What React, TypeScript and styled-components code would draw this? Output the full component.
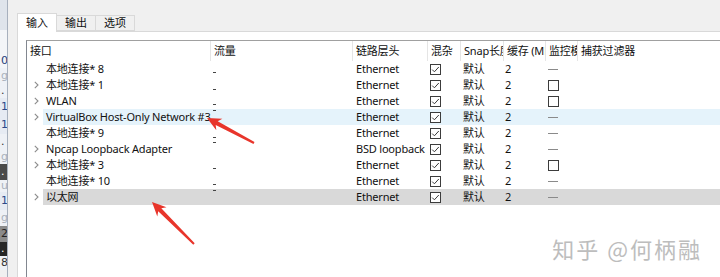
import React from "react";
import styled, { createGlobalStyle } from "styled-components";

type Tone = "plain" | "hover" | "selected";

type Iface = {
  name: string;
  expandable: boolean;
  traffic: number[];
  link: string;
  monitor: "box" | "none";
  tone: Tone;
};

const interfaces: Iface[] = [
  { name: "本地连接* 8", expandable: false, traffic: [11], link: "Ethernet", monitor: "none", tone: "plain" },
  { name: "本地连接* 1", expandable: true, traffic: [12], link: "Ethernet", monitor: "box", tone: "plain" },
  { name: "WLAN", expandable: true, traffic: [11], link: "Ethernet", monitor: "box", tone: "plain" },
  { name: "VirtualBox Host-Only Network #3", expandable: true, traffic: [1], link: "Ethernet", monitor: "none", tone: "hover" },
  { name: "本地连接* 9", expandable: false, traffic: [12], link: "Ethernet", monitor: "none", tone: "plain" },
  { name: "Npcap Loopback Adapter", expandable: true, traffic: [1], link: "BSD loopback", monitor: "none", tone: "plain" },
  { name: "本地连接* 3", expandable: true, traffic: [11], link: "Ethernet", monitor: "box", tone: "plain" },
  { name: "本地连接* 10", expandable: false, traffic: [11], link: "Ethernet", monitor: "none", tone: "plain" },
  { name: "以太网", expandable: true, traffic: [1], link: "Ethernet", monitor: "none", tone: "selected" },
];

const headers = ["接口", "流量", "链路层头", "混杂", "Snap长度", "缓存 (MB)", "监控模式", "捕获过滤器"];

const strip = [
  { ch: "", h: 30, bg: "#dfe4eb", fg: "#333" },
  { ch: "", h: 24, bg: "#f3f5f8", fg: "#333" },
  { ch: "03", h: 14, bg: "#f3f5f8", fg: "#24407a" },
  { ch: "g", h: 16, bg: "#eef1f6", fg: "#a9b0bb" },
  { ch: ".", h: 14, bg: "#eef1f6", fg: "#333" },
  { ch: "1", h: 18, bg: "#e6ebf3", fg: "#2a4a8a" },
  { ch: "1", h: 18, bg: "#e6ebf3", fg: "#2a4a8a" },
  { ch: ".", h: 16, bg: "#eef1f6", fg: "#333" },
  { ch: "g", h: 14, bg: "#eef1f6", fg: "#a9b0bb" },
  { ch: ".", h: 16, bg: "#4a4a4a", fg: "#fff" },
  { ch: "u", h: 12, bg: "#eef1f6", fg: "#a9b0bb" },
  { ch: "1", h: 18, bg: "#e6ebf3", fg: "#2a4a8a" },
  { ch: "g", h: 16, bg: "#eef1f6", fg: "#a9b0bb" },
  { ch: "2", h: 16, bg: "#8a8a8a", fg: "#222" },
  { ch: ".", h: 14, bg: "#262626", fg: "#fff" },
  { ch: "8", h: 14, bg: "#eef1f6", fg: "#333" },
];

const arrows = [
  { tail: [254, 143], tip: [207, 118] },
  { tail: [194, 244], tip: [152, 202] },
];

// red annotation arrow as a tapered polygon
const arrowPoints = (tail: number[], tip: number[]) => {
  const dx = tip[0] - tail[0];
  const dy = tip[1] - tail[1];
  const len = Math.hypot(dx, dy);
  const ux = dx / len;
  const uy = dy / len;
  const nx = -uy;
  const ny = ux;
  const head = 14;
  const bx = tip[0] - ux * head;
  const by = tip[1] - uy * head;
  const nb = tip[0] - ux * (head - 3);
  const nby = tip[1] - uy * (head - 3);
  const pts = [
    [tip[0], tip[1]],
    [bx + nx * 6.5, by + ny * 6.5],
    [nb + nx * 2.2, nby + ny * 2.2],
    [tail[0] + nx * 1, tail[1] + ny * 1],
    [tail[0] - nx * 1, tail[1] - ny * 1],
    [nb - nx * 2.2, nby - ny * 2.2],
    [bx - nx * 6.5, by - ny * 6.5],
  ];
  return pts.map((p) => p.map((v) => v.toFixed(1)).join(",")).join(" ");
};

const Chevron = () => (
  <svg width="5" height="8" viewBox="0 0 5 8">
    <polyline points="0.8,0.8 4,4 0.8,7.2" fill="none" stroke="#8c8c8c" strokeWidth="1.1" />
  </svg>
);

const CheckBox: React.FC<{ checked: boolean }> = ({ checked }) => (
  <svg width="11" height="11" viewBox="0 0 11 11">
    <rect x="0.5" y="0.5" width="10" height="10" fill="#fff" stroke="#3c3c3c" />
    {checked && <polyline points="2.2,5.6 4.4,7.8 8.8,3" fill="none" stroke="#3c3c3c" strokeWidth="1" />}
  </svg>
);

const Sparkline: React.FC<{ marks: number[] }> = ({ marks }) => (
  <svg width="6" height="16" viewBox="0 0 6 16">
    {marks.map((y) => (
      <rect key={y} x="0" y={y} width="3" height="1" fill="#444" />
    ))}
  </svg>
);

const App: React.FC = () => {
  return (
    <Page>
      <GlobalStyle />
      <LeftStrip>
        {strip.map((s, i) => (
          <StripCell key={i} h={s.h} bg={s.bg} fg={s.fg}>
            {s.ch}
          </StripCell>
        ))}
      </LeftStrip>
      <Window>
        <TabBar>
          <Tab active>输入</Tab>
          <Tab>输出</Tab>
          <Tab>选项</Tab>
        </TabBar>
        <Panel>
          <ListBox>
            <Header>
              {headers.map((h) => (
                <HeaderCell key={h}>{h}</HeaderCell>
              ))}
            </Header>
            {interfaces.map((it) => (
              <Row key={it.name}>
                <Expander>{it.expandable && <Chevron />}</Expander>
                <RowBody tone={it.tone}>
                  <Cell pad={3}>{it.name}</Cell>
                  <Cell pad={2}>
                    <Sparkline marks={it.traffic} />
                  </Cell>
                  <Cell pad={3}>{it.link}</Cell>
                  <Cell pad={2}>
                    <CheckBox checked />
                  </Cell>
                  <Cell pad={2}>默认</Cell>
                  <Cell pad={1}>2</Cell>
                  <Cell pad={2}>{it.monitor === "box" ? <CheckBox checked={false} /> : <Dash />}</Cell>
                  <Cell pad={3}></Cell>
                </RowBody>
              </Row>
            ))}
          </ListBox>
        </Panel>
      </Window>
      <Overlay width="720" height="277" viewBox="0 0 720 277">
        {arrows.map((a, i) => (
          <polygon key={i} points={arrowPoints(a.tail, a.tip)} fill="#e8352b" />
        ))}
      </Overlay>
      <Watermark>知乎 @何柄融</Watermark>
    </Page>
  );
};

const GlobalStyle = createGlobalStyle`
  html, body {
    margin: 0;
    padding: 0;
    background: #f0f0f0;
    overflow: hidden;
  }
  body {
    font-family: "Noto Sans", "Noto Sans CJK SC", sans-serif;
    color: #111;
  }
`;

const Page = styled.div`
  position: relative;
  display: flex;
  width: 720px;
  height: 277px;
  overflow: hidden;
`;

const LeftStrip = styled.div`
  width: 7px;
  flex: none;
  display: flex;
  flex-direction: column;
  border-right: 1px solid #a7b0bd;
  overflow: hidden;
`;

const StripCell = styled.div<{ h: number; bg: string; fg: string }>`
  height: ${(p) => p.h}px;
  flex: none;
  background: ${(p) => p.bg};
  color: ${(p) => p.fg};
  font-family: "DejaVu Sans", sans-serif;
  font-size: 11px;
  line-height: ${(p) => p.h}px;
  white-space: nowrap;
  padding-left: 1px;
`;

const Window = styled.div`
  flex: 1;
  display: flex;
  flex-direction: column;
  padding-top: 13px;
  background: #f0f0f0;
`;

const TabBar = styled.div`
  display: flex;
  align-items: flex-end;
  height: 18px;
  padding-left: 9px;
  position: relative;
  z-index: 1;
`;

const Tab = styled.div<{ active?: boolean }>`
  width: ${(p) => (p.active ? 40 : 39)}px;
  height: ${(p) => (p.active ? 19 : 16)}px;
  box-sizing: border-box;
  margin-bottom: ${(p) => (p.active ? -1 : 0)}px;
  background: ${(p) => (p.active ? "#ffffff" : "#f0f0f0")};
  border: 1px solid #d9d9d9;
  border-bottom: ${(p) => (p.active ? "none" : "1px solid #d9d9d9")};
  border-left: ${(p) => (p.active ? "1px solid #d9d9d9" : "none")};
  font-size: 11px;
  line-height: ${(p) => (p.active ? 18 : 14)}px;
  text-align: center;
  color: #111;
`;

const Panel = styled.div`
  flex: 1;
  display: flex;
  margin-left: 9px;
  padding: 8px 0 0 8px;
  background: #ffffff;
  border-top: 1px solid #d9d9d9;
  border-left: 1px solid #d9d9d9;
`;

const ListBox = styled.div`
  flex: 1;
  display: flex;
  flex-direction: column;
  background: #ffffff;
  border-top: 1px solid #a0a0a0;
  border-left: 1px solid #828790;
`;

const Header = styled.div`
  display: grid;
  grid-template-columns: 184px 142px 75px 33px 43px 42px 32px 1fr;
  height: 20px;
`;

const HeaderCell = styled.div`
  box-sizing: border-box;
  padding-left: 3px;
  border-right: 1px solid #e5e5e5;
  font-size: 11px;
  line-height: 20px;
  white-space: nowrap;
  overflow: hidden;
  letter-spacing: -0.2px;
  &:last-child {
    border-right: none;
  }
`;

const Row = styled.div`
  display: flex;
  height: 16px;
`;

const Expander = styled.div`
  width: 16px;
  flex: none;
  box-sizing: border-box;
  padding-left: 7px;
  display: flex;
  align-items: center;
`;

const RowBody = styled.div<{ tone: Tone }>`
  flex: 1;
  display: grid;
  grid-template-columns: 168px 142px 75px 33px 43px 42px 32px 1fr;
  background: ${(p) => (p.tone === "hover" ? "#e5f3fb" : p.tone === "selected" ? "#d9d9d9" : "transparent")};
`;

const Cell = styled.div<{ pad: number }>`
  box-sizing: border-box;
  padding-left: ${(p) => p.pad}px;
  display: flex;
  align-items: center;
  font-size: 11px;
  line-height: 16px;
  letter-spacing: -0.2px;
  white-space: nowrap;
  overflow: hidden;
  color: #111;
`;

const Dash = styled.div`
  width: 10px;
  height: 1px;
  background: #8a8a8a;
`;

const Overlay = styled.svg`
  position: absolute;
  left: 0;
  top: 0;
  pointer-events: none;
`;

const Watermark = styled.div`
  position: absolute;
  right: 18px;
  bottom: 18px;
  font-family: "Noto Sans CJK SC", "Noto Sans", sans-serif;
  font-size: 22px;
  line-height: 22px;
  letter-spacing: 2px;
  color: #bdbdbd;
  text-shadow: 0 0 2px #ffffff, 0 0 1px #ffffff;
  white-space: nowrap;
`;

export default App;
